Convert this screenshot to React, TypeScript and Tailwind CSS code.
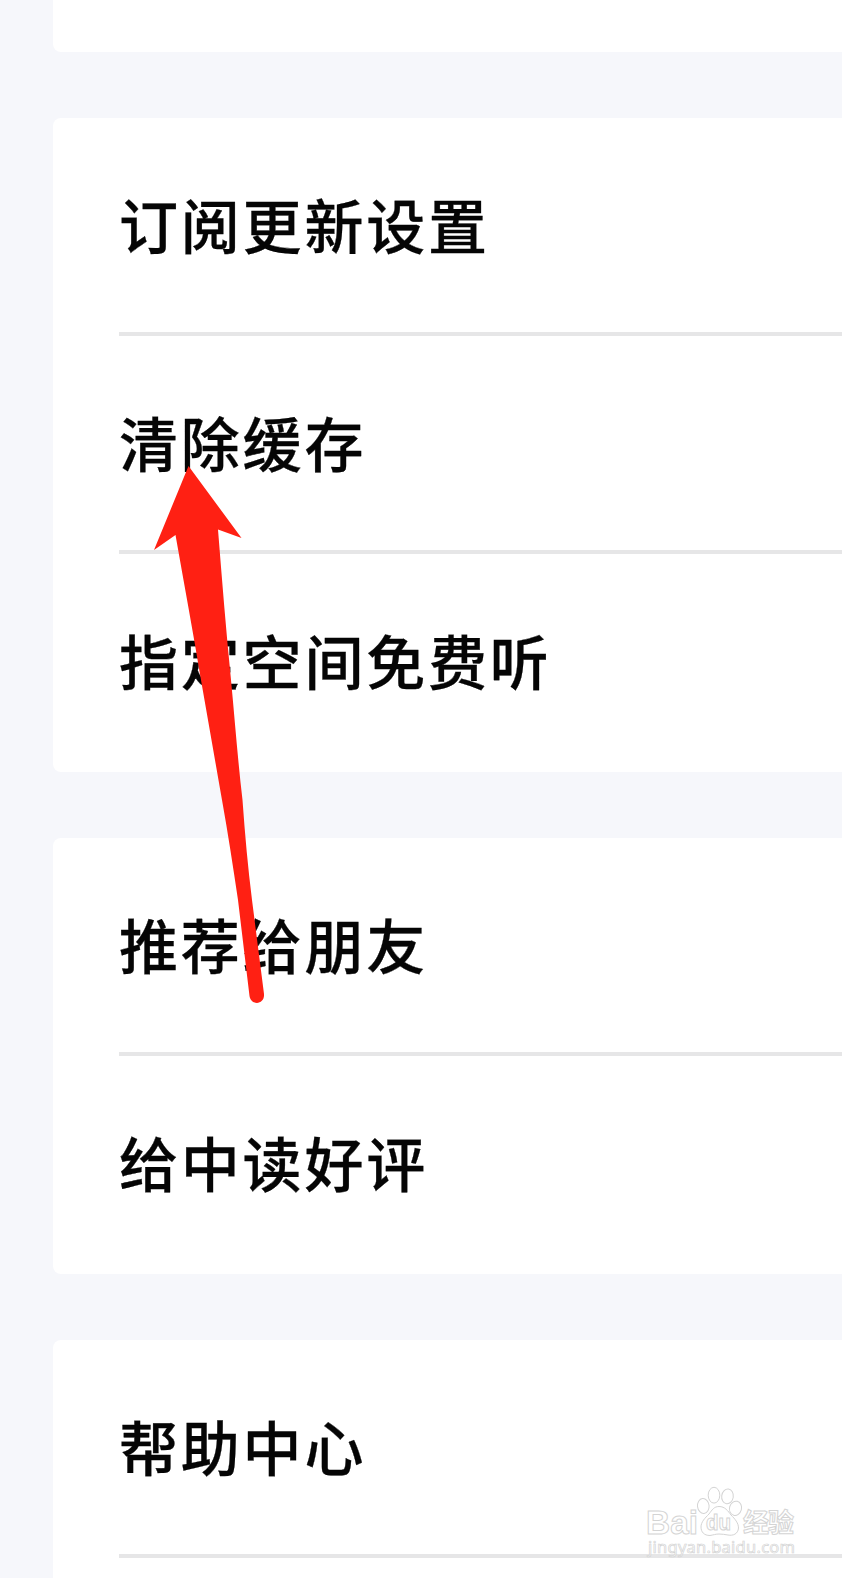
type SettingsGroupProps = {
  items: string[];
};

const groups = [
  ['订阅更新设置', '清除缓存', '指定空间免费听'],
  ['推荐给朋友', '给中读好评'],
  ['帮助中心', ''],
];

function SettingsGroup({ items }: SettingsGroupProps) {
  return (
    <section className="shrink-0 overflow-hidden rounded-l-lg bg-white pl-[66px]">
      {items.map((item, index) => (
        <div
          key={index}
          className={`flex h-[218px] items-center text-[59px] leading-none font-medium tracking-[2.8px] whitespace-nowrap text-[#050505] [-webkit-text-stroke:0.3px_#050505] ${
            index < items.length - 1 ? 'border-b-4 border-[#e6e6e7] pt-[8px]' : 'pt-[5px]'
          }`}
        >
          {item}
        </div>
      ))}
    </section>
  );
}

function Arrow() {
  return (
    <svg
      className="absolute top-[460px] left-[150px]"
      width="120"
      height="550"
      viewBox="150 460 120 550"
      fill="#ff2013"
    >
      <path d="M188.5 466L241.5 538L218 529.5C222 580 226 630 231 680C235 722 238 762 242.5 800C245 835 248 868 252 900L264 994C265 1005 251 1006 249.5 996L238 900C233 867 228 833 222 800C215 760 208 720 201 680C193 632 184 583 175.5 535L154 550Z" />
    </svg>
  );
}

function Watermark() {
  return (
    <svg
      className="absolute top-[1480px] left-[640px]"
      width="170"
      height="86"
      viewBox="640 1480 170 86"
      fill="#ffffff"
      stroke="#d4d4d4"
      strokeWidth="1"
      fontFamily="'Liberation Sans', 'Noto Sans CJK SC', sans-serif"
    >
      <text x="646" y="1534" fontSize="34" fontWeight="700" textLength="52" lengthAdjust="spacingAndGlyphs">
        Bai
      </text>
      <path d="M719 1506.5C725 1506.500 728 1511 731 1515C735 1519 738.5 1523 738.5 1528C738 1534 733 1536 728 1535C725 1534.500 722 1534 719 1534C716 1534 713 1535 710 1535.500C704 1535.500 701 1532 701 1527C701 1522 705 1518 709 1514C712 1510 714 1506.500 719 1506.5Z" />
      <ellipse cx="703.3" cy="1506" rx="5.8" ry="7.5" transform="rotate(-6 703.3 1506)" />
      <ellipse cx="714" cy="1495.2" rx="5.8" ry="7.9" />
      <ellipse cx="727.5" cy="1496.4" rx="5.8" ry="7.4" transform="rotate(8 727.5 1496.4)" />
      <ellipse cx="735.5" cy="1508.3" rx="6" ry="7.2" transform="rotate(15 735.5 1508.3)" />
      <text x="706" y="1530" fontSize="22" fontWeight="700" textLength="25" lengthAdjust="spacingAndGlyphs">
        du
      </text>
      <text x="743" y="1532" fontSize="26" fontWeight="700" textLength="51" fontFamily="'Noto Sans CJK SC', sans-serif">
        经验
      </text>
      <text x="648" y="1553" fontSize="16.5" fill="#ffffffb0" strokeWidth="0.7" textLength="147" fontFamily="'Noto Sans', sans-serif">
        jingyan.baidu.com
      </text>
    </svg>
  );
}

export default function App() {
  return (
    <main className="relative h-[1578px] w-full overflow-hidden bg-[#f6f7fb] font-['Liberation_Sans','Noto_Sans_CJK_SC',sans-serif]">
      <div className="flex flex-col gap-[66px] pl-[53px]">
        <div className="h-[52px] rounded-bl-lg bg-white" />
        {groups.map((items) => (
          <SettingsGroup key={items[0]} items={items} />
        ))}
      </div>
      <Arrow />
      <Watermark />
    </main>
  );
}
